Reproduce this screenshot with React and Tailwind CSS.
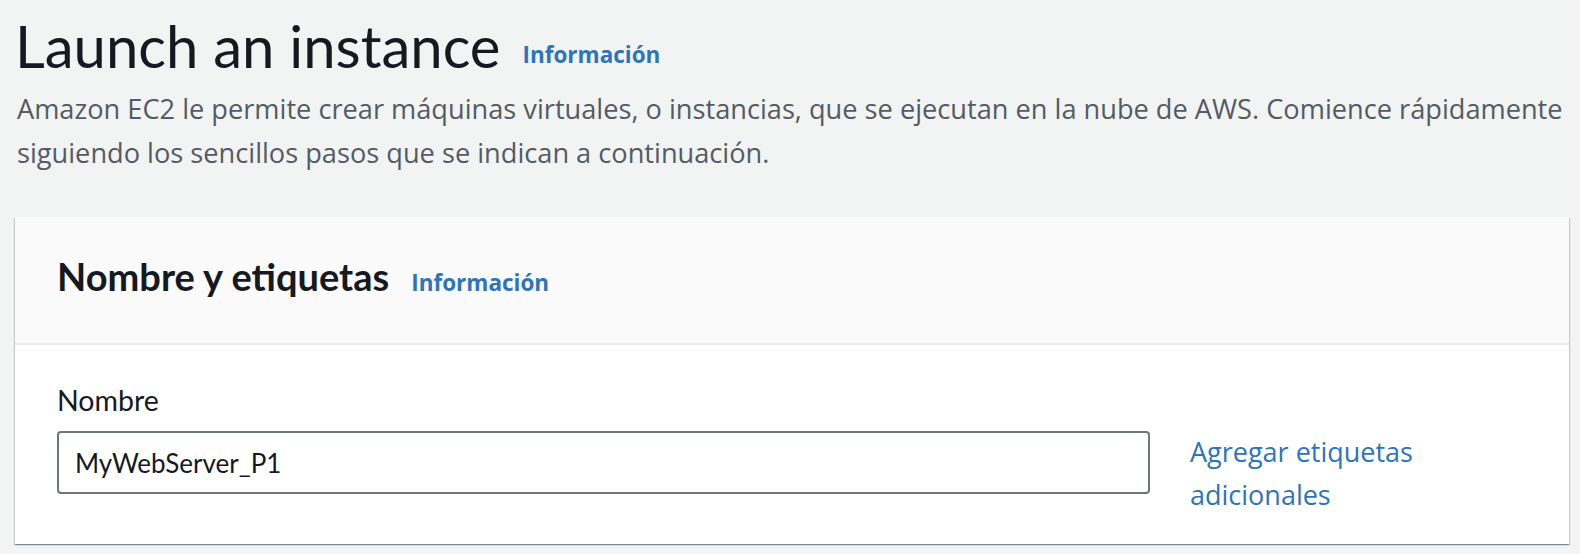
export default function App() {
  return (
    <div className="min-h-[554px] bg-[#f2f3f3] pl-[15px] pr-[11px] pt-[10px] font-['Lato','Open_Sans',sans-serif] text-[#16191f]">
      <div className="flex items-end gap-[22px]">
        <h1 className="text-[58px] leading-[72px] font-normal">Launch an instance</h1>
        <a href="#" className="mb-[16px] font-['Open_Sans',sans-serif] text-[22.5px] leading-none font-bold text-[#2f73b9]">Información</a>
      </div>
      <p className="mt-[5px] pl-[2px] font-['Open_Sans',sans-serif] text-[27.2px] leading-[44px] text-[#545b64]">
        Amazon EC2 le permite crear máquinas virtuales, o instancias, que se ejecutan en la nube de AWS. Comience rápidamente
        siguiendo los sencillos pasos que se indican a continuación.
      </p>

      <section className="mt-[42px] bg-white shadow-[0_1px_1px_0_rgba(0,28,36,0.3),1px_1px_1px_0_rgba(0,28,36,0.15),-1px_1px_1px_0_rgba(0,28,36,0.15)]">
        <div className="flex h-[128px] items-baseline gap-[22px] border-b-2 border-[#eaeded] bg-[#fafafa] pl-[42px] pt-[36px]">
          <h2 className="text-[38px] leading-[46px] font-bold">Nombre y etiquetas</h2>
          <a href="#" className="font-['Open_Sans',sans-serif] text-[22.5px] font-bold text-[#2f73b9]">Información</a>
        </div>
        <div className="flex items-start gap-[40px] pl-[42px] pb-[28px] pt-[35px]">
          <div className="w-[1093px]">
            <label className="block text-[28.5px] leading-[40px]">Nombre</label>
            <input
              readOnly
              value="MyWebServer_P1"
              className="mt-[11px] h-[63px] w-full rounded-[4px] border-2 border-[#6e7480] bg-white px-[16px] text-[26px] text-[#16191f] outline-none"
            />
          </div>
          <a href="#" className="mt-[50px] w-[260px] font-['Open_Sans',sans-serif] text-[27px] leading-[43px] text-[#2f73b9]">
            Agregar etiquetas adicionales
          </a>
        </div>
      </section>
    </div>
  );
}
